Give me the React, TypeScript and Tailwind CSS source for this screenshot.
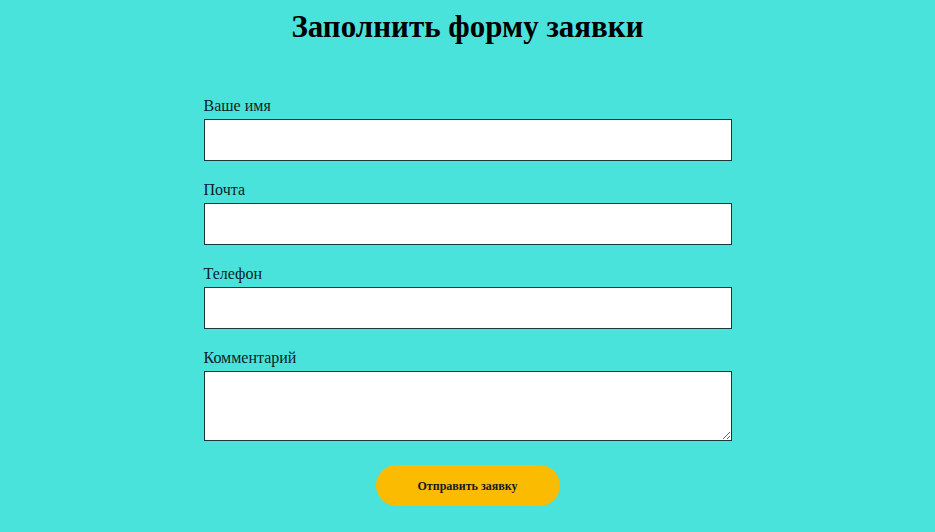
export default function App() {
  return (
    <div className="min-h-[532px] w-full bg-[#4ae3dc] font-['Liberation_Serif',serif] text-[#0a1f1f]">
      <h1 className="pt-[10px] text-center text-[31px] font-bold leading-[34px] text-black">Заполнить форму заявки</h1>
      <form className="mx-auto mt-[52px] flex w-[528px] flex-col" onSubmit={(e) => e.preventDefault()}>
        {["Ваше имя", "Почта", "Телефон"].map((l) => (
          <div key={l} className="mb-[19px] flex flex-col">
            <label className="mb-[3px] text-[16px] leading-[20px]">{l}</label>
            <input className="block h-[42px] w-full border border-[#1a3a3a] bg-white px-2 outline-none" />
          </div>
        ))}
        <div className="flex flex-col">
          <label className="mb-[3px] text-[16px] leading-[20px]">Комментарий</label>
          <textarea className="block h-[70px] w-full border border-[#1a3a3a] bg-white px-2" />
        </div>
        <button type="submit" className="mx-auto mt-[24px] h-[41px] w-[184px] rounded-full bg-[#fbbb00] text-[12px] font-bold text-[#1a1a1a]">
          Отправить заявку
        </button>
      </form>
    </div>
  );
}
